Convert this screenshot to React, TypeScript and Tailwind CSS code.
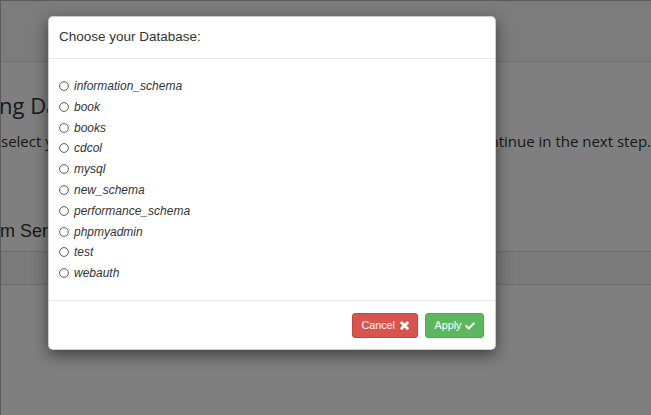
import React from "react";
import { FaCheck } from "react-icons/fa";

const dbs = [
  "information_schema",
  "book",
  "books",
  "cdcol",
  "mysql",
  "new_schema",
  "performance_schema",
  "phpmyadmin",
  "test",
  "webauth",
];

function Radio() {
  return (
    <svg width="10" height="10" viewBox="0 0 10 10" className="shrink-0">
      <circle cx="5" cy="5" r="4.4" fill="#fff" stroke="#555" strokeWidth="0.95" />
    </svg>
  );
}

function TimesIcon() {
  return (
    <svg width="9" height="9" viewBox="110 290 1188 1212" fill="currentColor" className="shrink-0">
      <path d="M1298 1270q0 40-28 68l-136 136q-28 28-68 28t-68-28l-294-294-294 294q-28 28-68 28t-68-28l-136-136q-28-28-28-68t28-68l294-294-294-294q-28-28-28-68t28-68l136-136q28-28 68-28t68 28l294 294 294-294q28-28 68-28t68 28l136 136q28 28 28 68t-28 68l-294 294 294 294q28 28 28 68z" />
    </svg>
  );
}

export default function App() {
  return (
    <div
      className="relative h-[415px] w-[651px] overflow-hidden bg-white border-l border-t border-[#5c5c5c] text-[#333]"
      style={{ fontFamily: '"Open Sans", sans-serif' }}
    >
      {/* page behind */}
      <div className="h-[61px] bg-[#f8f8f8] border-b border-[#e7e7e7]" />
      <div className="mt-[28px] ml-[-2px] text-[22px] leading-[30px] whitespace-nowrap">ng Da</div>
      <div className="mt-[9.6px] flex justify-between text-[15px] leading-[22px] whitespace-nowrap">
        <span>select yo</span>
        <span>continue in the next step.</span>
      </div>
      <div
        className="mt-[69.4px] ml-[-1px] text-[18px] leading-[20px] whitespace-nowrap"
        style={{ fontFamily: '"Liberation Sans", Arial, sans-serif' }}
      >
        m Serv
      </div>
      <div className="mt-[9.6px] h-[34px] border-y border-[#dddddd] bg-[#f5f5f5]" />

      {/* overlay */}
      <div className="absolute inset-0 bg-black/50">
        <div
          className="ml-[47px] mt-[15px] w-[448px] rounded-[5px] border border-black/20 bg-white shadow-[0_5px_15px_rgba(0,0,0,0.5)] text-[#333]"
          style={{ fontFamily: '"Liberation Sans", Arial, sans-serif' }}
        >
          <div className="flex h-[42px] items-center border-b border-[#e5e5e5] px-[10px] text-[13.5px]">
            Choose your Database:
          </div>
          <div className="h-[241px] px-[10px] pt-[16.6px]">
            {dbs.map((d) => (
              <label key={d} className="flex h-[20.8px] items-center gap-[5px]">
                <Radio />
                <span className="text-[12px] italic leading-none">{d}</span>
              </label>
            ))}
          </div>
          <div className="flex h-[49px] items-start justify-end gap-[7px] border-t border-[#e5e5e5] pr-[11px] pt-[12px]">
            <button className="flex h-[25px] items-center gap-[5px] rounded-[3px] border border-[#d43f3a] bg-[#d9534f] px-[8.5px] text-[10.8px] text-white">
              Cancel
              <TimesIcon />
            </button>
            <button className="flex h-[25px] items-center gap-[3.5px] rounded-[3px] border border-[#4cae4c] bg-[#5cb85c] px-[8px] text-[10.8px] text-white">
              Apply
              <FaCheck size={10} />
            </button>
          </div>
        </div>
      </div>
    </div>
  );
}
